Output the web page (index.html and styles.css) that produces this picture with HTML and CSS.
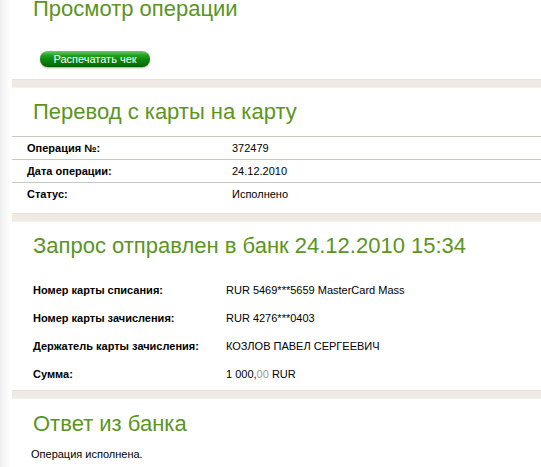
FILE: index.html
```html
<!DOCTYPE html>
<html lang="ru">
<head>
<meta charset="utf-8">
<title>Просмотр операции</title>
<link rel="stylesheet" href="styles.css">
</head>
<body>
<div class="page">
  <h1 class="title">Просмотр операции</h1>
  <div class="actions">
    <button class="btn-print" type="button">Распечатать чек</button>
  </div>
  <div class="divider"></div>

  <h2 class="heading">Перевод с карты на карту</h2>
  <div class="info-table">
    <div class="info-row"><span class="info-label">Операция №:</span><span class="info-value">372479</span></div>
    <div class="info-row"><span class="info-label">Дата операции:</span><span class="info-value">24.12.2010</span></div>
    <div class="info-row last"><span class="info-label">Статус:</span><span class="info-value">Исполнено</span></div>
  </div>
  <div class="divider"></div>

  <h2 class="heading">Запрос отправлен в банк 24.12.2010 15:34</h2>
  <div class="detail-list">
    <div class="detail-row"><span class="detail-label">Номер карты списания:</span><span class="detail-value">RUR 5469***5659 MasterCard Mass</span></div>
    <div class="detail-row"><span class="detail-label">Номер карты зачисления:</span><span class="detail-value">RUR 4276***0403</span></div>
    <div class="detail-row"><span class="detail-label">Держатель карты зачисления:</span><span class="detail-value">КОЗЛОВ ПАВЕЛ СЕРГЕЕВИЧ</span></div>
    <div class="detail-row"><span class="detail-label">Сумма:</span><span class="detail-value">1 000,<span class="cents">00</span> RUR</span></div>
  </div>
  <div class="divider"></div>

  <h2 class="heading heading-answer">Ответ из банка</h2>
  <p class="answer">Операция исполнена.</p>
</div>
</body>
</html>
```
FILE: styles.css
```css
html, body {
  margin: 0;
  padding: 0;
}
body {
  background: linear-gradient(to right, #eeeeee 0, #f7f7f7 5px, #ffffff 11px);
  font-family: "Liberation Sans", Arial, sans-serif;
  font-size: 11px;
  color: #000;
  height: 467px;
  overflow: hidden;
}
.page {
  margin-left: 12px;
}
.title {
  margin: 0;
  padding-left: 21px;
  font-weight: normal;
  font-size: 22px;
  line-height: 17px;
  height: 17px;
  color: #5a951d;
}
.actions {
  padding: 34px 0 0 28px;
  height: 16px;
}
.btn-print {
  display: block;
  width: 110px;
  height: 16px;
  padding: 0;
  border: none;
  border-radius: 8px;
  background: linear-gradient(to bottom, #6ccc68 0, #22a022 28%, #0b880b 55%, #066806 100%);
  box-shadow: 0 1px 2px rgba(0, 0, 0, 0.35), inset 0 -1px 1px rgba(0, 60, 0, 0.4);
  color: #fff;
  font-family: "Liberation Sans", Arial, sans-serif;
  font-size: 11px;
  line-height: 16px;
  text-align: center;
  cursor: pointer;
}
.divider {
  margin-top: 12px;
  height: 7px;
  background: #efebe4;
  border-top: 1px solid #e6e2da;
  border-bottom: 1px solid #f3f1ec;
}
.heading {
  margin: 12px 0 0 0;
  padding-left: 21px;
  font-weight: normal;
  font-size: 22px;
  line-height: 24px;
  color: #5a951d;
}
.info-table {
  margin-top: 12px;
  border-top: 1px solid #c8c8c0;
}
.info-row {
  display: flex;
  height: 22px;
  line-height: 22px;
  border-bottom: 1px solid #c8c8c0;
}
.info-row.last {
  border-bottom: none;
}
.info-label {
  width: 205px;
  padding-left: 15px;
  font-weight: bold;
}
.info-value {
  flex: 1;
}
.info-table + .divider {
  margin-top: 8px;
}
.detail-list {
  margin-top: 18px;
}
.detail-row {
  display: flex;
  height: 28px;
  line-height: 28px;
}
.detail-label {
  width: 193px;
  padding-left: 21px;
  font-weight: bold;
}
.detail-value {
  flex: 1;
}
.cents {
  color: #9a9a9a;
}
.detail-list + .divider {
  margin-top: 2px;
}
.heading-answer {
  margin-top: 13px;
}
.answer {
  margin: 11px 0 0 19px;
  line-height: 14px;
}
```
